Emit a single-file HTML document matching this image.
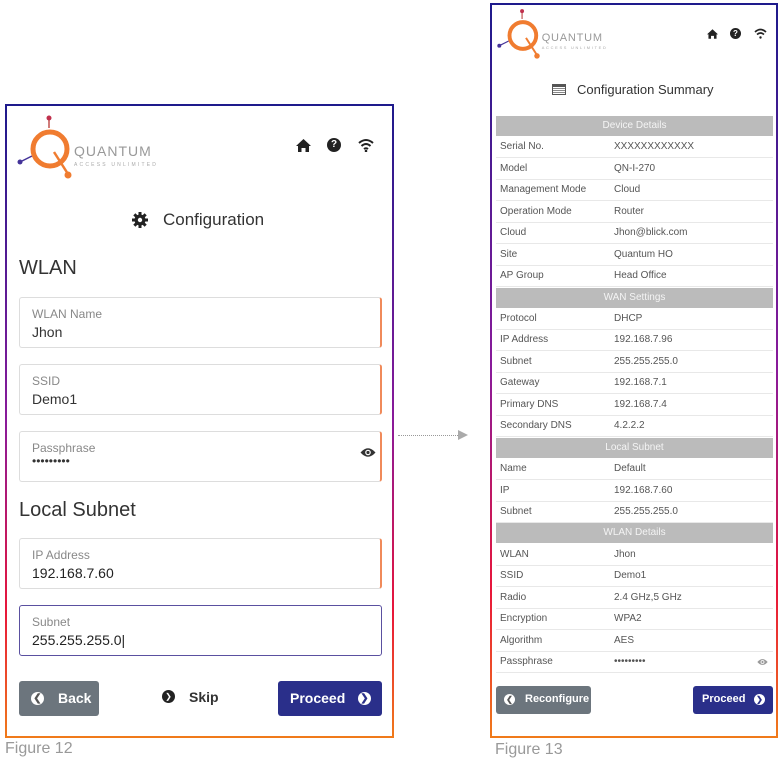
<!DOCTYPE html>
<html><head><meta charset="utf-8"><style>
*{box-sizing:border-box;margin:0;padding:0}
body{width:784px;height:765px;background:#fff;position:relative;font-family:"Liberation Sans",sans-serif;overflow:hidden}
.a{position:absolute}
.panel{position:absolute;border:2px solid;border-image:linear-gradient(180deg,#1e1a8c 0%,#8a1a9a 50%,#e8163a 80%,#f07a1a 100%) 1}
.inp{position:absolute;left:19px;width:363px;height:51px;border:1px solid #ddd;border-right:2px solid #f08a5a;border-radius:3px;background:#fff}
.inp .l{position:absolute;left:12px;top:9px;font-size:12px;color:#888}
.inp .v{position:absolute;left:12px;top:26px;font-size:14px;color:#333}
.btn{position:absolute;border-radius:3px;color:#fff;font-weight:bold;font-size:14px}
.btn span{position:absolute}
.row{position:absolute;left:496px;width:277px;height:21.5px;border-bottom:1px solid #e8e8e8;font-size:10px;color:#555;line-height:21px}
.row span{position:absolute;left:4px}
.row b{position:absolute;left:118px;font-weight:normal}
.hd{position:absolute;left:496px;width:277px;height:20px;background:#bbb;color:#f4f4f4;font-size:10px;text-align:center;line-height:20px}
.ic{display:block;border-radius:50%;background:#fff;color:#555;font-size:10px;width:13px;height:13px;line-height:13px;text-align:center}
</style></head><body>

<!-- Figure 12 -->
<div class="panel" style="left:5px;top:104px;width:389px;height:634px"></div>
<svg class="a" style="left:16px;top:114px" width="160" height="70" viewBox="0 0 160 70">
<line x1="33" y1="4" x2="33" y2="14" stroke="#c0504d" stroke-width="1.5"/><circle cx="33" cy="4" r="2.5" fill="#c0304d"/>
<line x1="4" y1="48" x2="16" y2="42" stroke="#443399" stroke-width="1.5"/><circle cx="4" cy="48" r="2.5" fill="#443399"/>
<circle cx="34" cy="35" r="17" fill="none" stroke="#f07c30" stroke-width="5"/>
<line x1="38" y1="38" x2="52" y2="60" stroke="#f07c30" stroke-width="2.5"/><circle cx="52" cy="61" r="3.5" fill="#f07c30"/>
<text x="58" y="42" font-size="14" fill="#999" font-family="Liberation Sans" letter-spacing="1">QUANTUM</text>
<text x="58" y="52" font-size="5" fill="#aaa" font-family="Liberation Sans" letter-spacing="2.2">ACCESS UNLIMITED</text>
</svg>
<svg class="a" style="left:296px;top:139px" width="15" height="13" viewBox="0 0 15 13"><path d="M7.5 0 L15 7 L13 7 L13 13 L9.5 13 L9.5 9 L5.5 9 L5.5 13 L2 13 L2 7 L0 7 Z" fill="#222"/></svg>
<div class="a" style="left:327px;top:138px;width:14px;height:14px;border-radius:50%;background:#222;color:#fff;font-size:10px;text-align:center;line-height:14px;font-weight:bold">?</div>
<svg class="a" style="left:358px;top:138px" width="16" height="14"><path d="M1 5 Q8 -1 15 5 M3.5 8 Q8 4 12.5 8 M6 11 Q8 9.5 10 11" stroke="#222" stroke-width="2" fill="none"/><circle cx="8" cy="13" r="1.3" fill="#222"/></svg>
<svg class="a" style="left:132px;top:212px" width="16" height="16" viewBox="0 0 16 16"><g fill="#222"><circle cx="8" cy="8" r="5.5"/><rect x="6.5" y="0" width="3" height="16"/><rect x="0" y="6.5" width="16" height="3"/><rect x="6.5" y="0" width="3" height="16" transform="rotate(45 8 8)"/><rect x="6.5" y="0" width="3" height="16" transform="rotate(-45 8 8)"/></g><circle cx="8" cy="8" r="2.2" fill="#fff"/></svg>
<div class="a" style="left:163px;top:210px;font-size:17px;color:#333">Configuration</div>
<div class="a" style="left:19px;top:257px;font-size:20px;color:#333">WLAN</div>
<div class="inp" style="top:297px"><div class="l">WLAN Name</div><div class="v">Jhon</div></div>
<div class="inp" style="top:364px"><div class="l">SSID</div><div class="v">Demo1</div></div>
<div class="inp" style="top:431px"><div class="l">Passphrase</div><div class="v" style="top:22px;font-size:12px">•••••••••</div>
<svg style="position:absolute;right:4px;top:15px" width="16" height="11" viewBox="0 0 16 11"><path d="M0.5 5.5 Q8 -3 15.5 5.5 Q8 14 0.5 5.5Z" fill="#333"/><circle cx="8" cy="5.5" r="2.8" fill="#fff"/><circle cx="8" cy="5.5" r="1.6" fill="#333"/></svg></div>
<div class="a" style="left:19px;top:499px;font-size:20px;color:#333">Local Subnet</div>
<div class="inp" style="top:538px"><div class="l">IP Address</div><div class="v" style="color:#222">192.168.7.60</div></div>
<div class="inp" style="top:605px;border:1px solid #5a50a0"><div class="l">Subnet</div><div class="v" style="color:#222">255.255.255.0|</div></div>
<div class="btn" style="left:19px;top:681px;width:80px;height:35px;background:#6c757d"><span class="ic" style="left:12px;top:11px">&#10094;</span><span style="left:39px;top:9px">Back</span></div>
<div class="a" style="left:162px;top:690px;width:13px;height:13px;border-radius:50%;background:#222;color:#fff;font-size:8px;text-align:center;line-height:13px">&#10095;</div>
<div class="a" style="left:189px;top:689px;font-size:14px;color:#333;font-weight:bold">Skip</div>
<div class="btn" style="left:278px;top:681px;width:104px;height:35px;background:#2a2f8a"><span style="left:12px;top:9px">Proceed</span><span class="ic" style="left:80px;top:11px;color:#2a2f8a">&#10095;</span></div>
<div class="a" style="left:5px;top:740px;font-size:16px;color:#999">Figure 12</div>

<!-- arrow -->
<div class="a" style="left:398px;top:435px;width:60px;border-top:1px dotted #999"></div>
<div class="a" style="left:458px;top:430px;width:0;height:0;border-left:10px solid #aaa;border-top:5px solid transparent;border-bottom:5px solid transparent"></div>

<!-- Figure 13 -->
<div class="panel" style="left:490px;top:3px;width:288px;height:735px"></div>
<svg class="a" style="left:494px;top:8px" width="130" height="55" viewBox="0 0 160 70">
<line x1="33" y1="4" x2="33" y2="14" stroke="#c0504d" stroke-width="1.5"/><circle cx="33" cy="4" r="2.5" fill="#c0304d"/>
<line x1="4" y1="48" x2="16" y2="42" stroke="#443399" stroke-width="1.5"/><circle cx="4" cy="48" r="2.5" fill="#443399"/>
<circle cx="34" cy="35" r="17" fill="none" stroke="#f07c30" stroke-width="5"/>
<line x1="38" y1="38" x2="52" y2="60" stroke="#f07c30" stroke-width="2.5"/><circle cx="52" cy="61" r="3.5" fill="#f07c30"/>
<text x="58" y="42" font-size="14" fill="#999" font-family="Liberation Sans" letter-spacing="1">QUANTUM</text>
<text x="58" y="52" font-size="5" fill="#aaa" font-family="Liberation Sans" letter-spacing="2.2">ACCESS UNLIMITED</text>
</svg>
<svg class="a" style="left:707px;top:29px" width="11" height="10" viewBox="0 0 15 13"><path d="M7.5 0 L15 7 L13 7 L13 13 L9.5 13 L9.5 9 L5.5 9 L5.5 13 L2 13 L2 7 L0 7 Z" fill="#222"/></svg>
<div class="a" style="left:730px;top:28px;width:11px;height:11px;border-radius:50%;background:#222;color:#fff;font-size:8px;text-align:center;line-height:11px;font-weight:bold">?</div>
<svg class="a" style="left:754px;top:28px" width="13" height="11"><path d="M1 4 Q6.5 -1 12 4 M3 6.5 Q6.5 3.5 10 6.5" stroke="#222" stroke-width="1.7" fill="none"/><circle cx="6.5" cy="9.5" r="1.2" fill="#222"/></svg>
<div class="a" style="left:552px;top:84px;width:14px;height:11px;border:1px solid #555;border-top-width:3px;background:repeating-linear-gradient(180deg,#fff 0 1px,#888 1px 2px)"></div>
<div class="a" style="left:577px;top:82px;font-size:13px;color:#333">Configuration Summary</div>

<div class="hd" style="top:116px">Device Details</div>
<div class="row" style="top:136px"><span>Serial No.</span><b>XXXXXXXXXXXX</b></div>
<div class="row" style="top:158px"><span>Model</span><b>QN-I-270</b></div>
<div class="row" style="top:179px"><span>Management Mode</span><b>Cloud</b></div>
<div class="row" style="top:201px"><span>Operation Mode</span><b>Router</b></div>
<div class="row" style="top:222px"><span>Cloud</span><b>Jhon@blick.com</b></div>
<div class="row" style="top:244px"><span>Site</span><b>Quantum HO</b></div>
<div class="row" style="top:265px"><span>AP Group</span><b>Head Office</b></div>
<div class="hd" style="top:288px">WAN Settings</div>
<div class="row" style="top:308px"><span>Protocol</span><b>DHCP</b></div>
<div class="row" style="top:329px"><span>IP Address</span><b>192.168.7.96</b></div>
<div class="row" style="top:351px"><span>Subnet</span><b>255.255.255.0</b></div>
<div class="row" style="top:372px"><span>Gateway</span><b>192.168.7.1</b></div>
<div class="row" style="top:394px"><span>Primary DNS</span><b>192.168.7.4</b></div>
<div class="row" style="top:415px"><span>Secondary DNS</span><b>4.2.2.2</b></div>
<div class="hd" style="top:438px">Local Subnet</div>
<div class="row" style="top:458px"><span>Name</span><b>Default</b></div>
<div class="row" style="top:480px"><span>IP</span><b>192.168.7.60</b></div>
<div class="row" style="top:501px"><span>Subnet</span><b>255.255.255.0</b></div>
<div class="hd" style="top:523px">WLAN Details</div>
<div class="row" style="top:544px"><span>WLAN</span><b>Jhon</b></div>
<div class="row" style="top:565px"><span>SSID</span><b>Demo1</b></div>
<div class="row" style="top:587px"><span>Radio</span><b>2.4 GHz,5 GHz</b></div>
<div class="row" style="top:608px"><span>Encryption</span><b>WPA2</b></div>
<div class="row" style="top:630px"><span>Algorithm</span><b>AES</b></div>
<div class="row" style="top:651px"><span>Passphrase</span><b>•••••••••</b>
<svg style="position:absolute;right:5px;top:7px" width="11" height="8" viewBox="0 0 16 11"><path d="M0.5 5.5 Q8 -3 15.5 5.5 Q8 14 0.5 5.5Z" fill="#999"/><circle cx="8" cy="5.5" r="2.8" fill="#fff"/><circle cx="8" cy="5.5" r="1.6" fill="#999"/></svg></div>

<div class="btn" style="left:496px;top:686px;width:95px;height:28px;background:#6c757d;font-size:11px"><span class="ic" style="left:8px;top:8px;width:11px;height:11px;line-height:11px;font-size:8px">&#10094;</span><span style="left:29px;top:7px">Reconfigure</span></div>
<div class="btn" style="left:693px;top:686px;width:80px;height:28px;background:#2a2f8a;font-size:11px"><span style="left:9px;top:7px">Proceed</span><span class="ic" style="left:61px;top:8px;width:11px;height:11px;line-height:11px;font-size:8px;color:#2a2f8a">&#10095;</span></div>
<div class="a" style="left:495px;top:741px;font-size:16px;color:#999">Figure 13</div>
</body></html>
